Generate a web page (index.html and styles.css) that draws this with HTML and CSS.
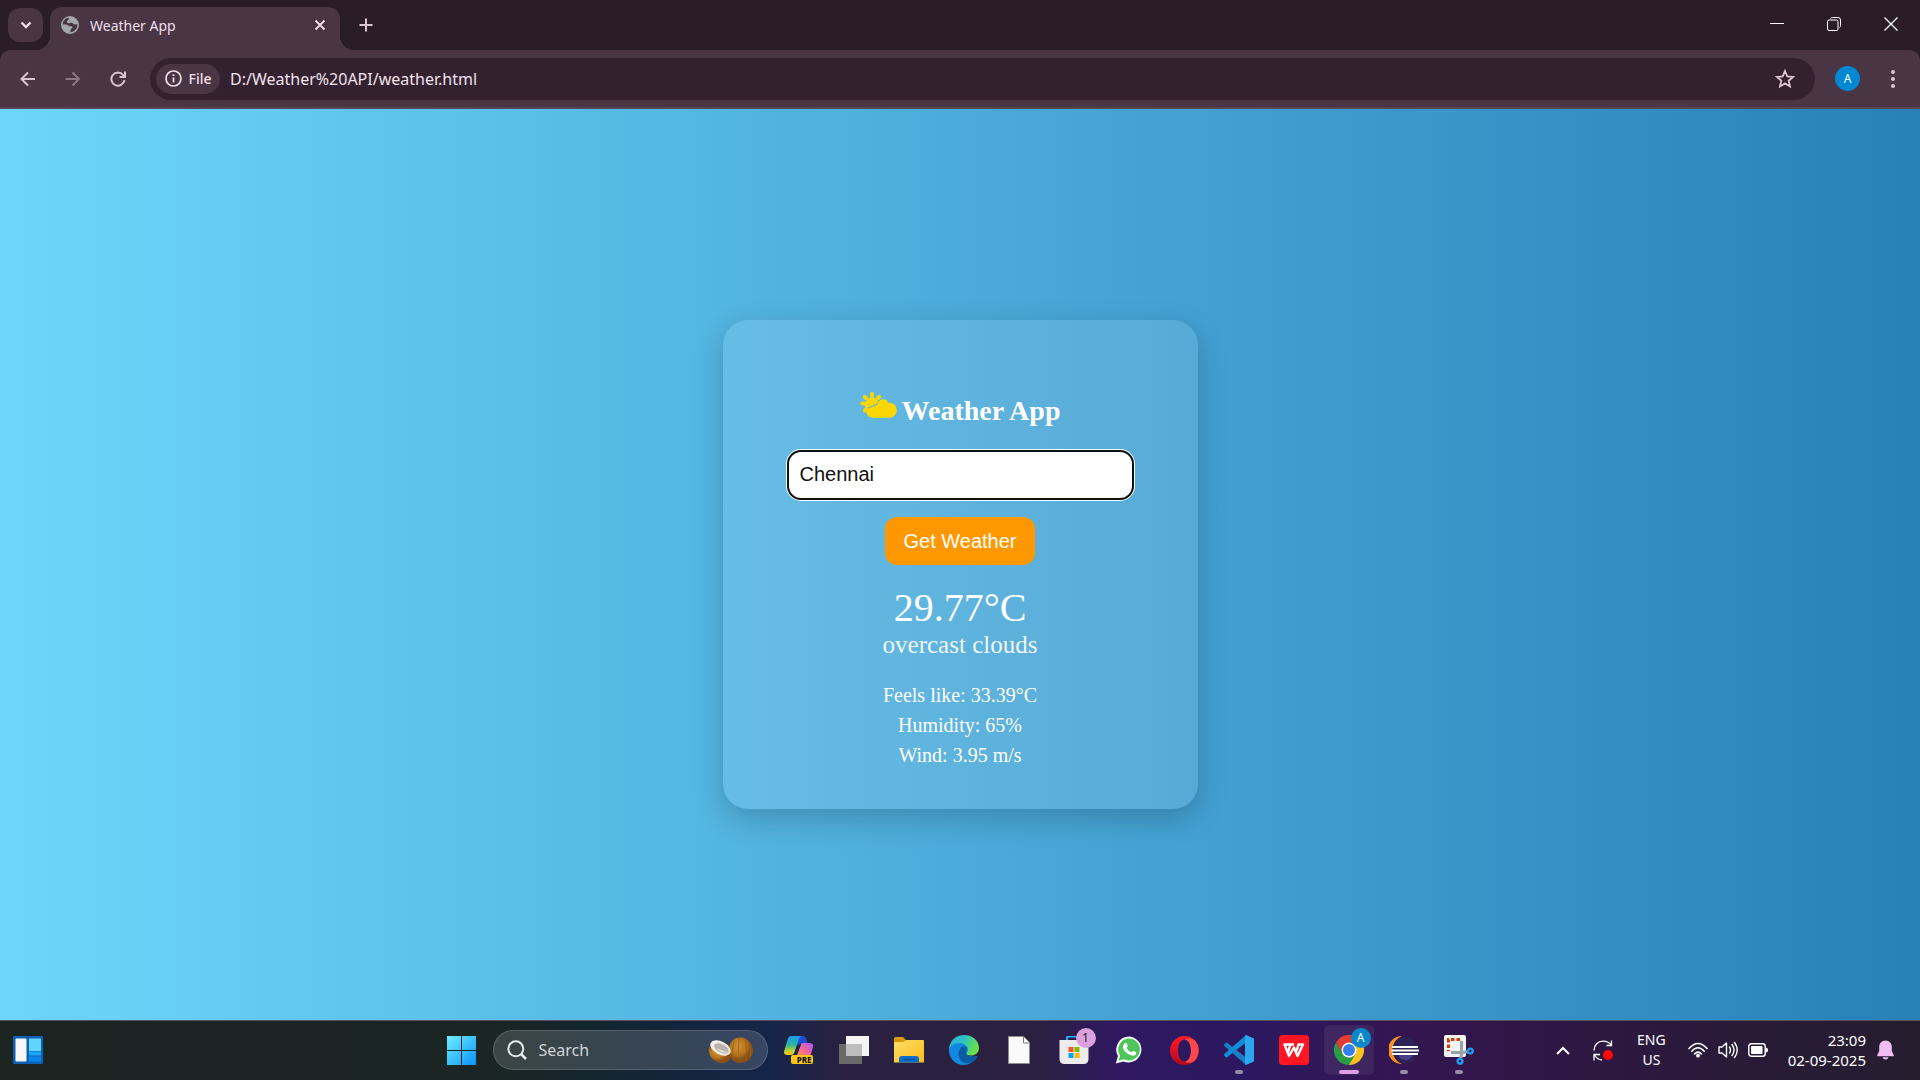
FILE: index.html
```html
<!DOCTYPE html>
<html lang="en">
<head>
<meta charset="utf-8">
<title>Weather App</title>
<link rel="stylesheet" href="styles.css">
</head>
<body>
<header class="browser">
  <div class="tabstrip">
    <button class="tab-search" aria-label="Search tabs"><svg width="12" height="8" viewBox="0 0 12 8"><path class="line" stroke-width="2.4" d="M1.500 1.500 6 6l4.500-4.500"/></svg></button>
    <div class="tab">
      <svg width="18" height="18" viewBox="0 0 18 18"><circle cx="9" cy="9" r="9" fill="#a2a6ad"/><path fill="#4a3545" d="M7.500 1.800C4 2.400 1.700 5.300 1.700 8.600h3.200c1.900 0 2.200 1.700 4 1.700h1.600c.7 0 1 .5 1 1 0 1.500-2 1-2 2.700v2.200c3.900-.3 6.800-3.500 6.800-7.200l-.2-1.500c-.5.800-1.200 1-2.100 1-1.700 0-1.900-1.800-3.600-1.800-1 0-1.700.5-2.800.5C6.500 7.200 6 6.500 6 5.600 6 4.300 7.600 4.500 7.600 3.200z"/></svg>
      <span class="tab-title">Weather App</span>
      <button class="plain" aria-label="Close tab"><svg width="12" height="12" viewBox="0 0 12 12"><path class="line" stroke-width="1.800" d="m1.500 1.500 9 9m0-9-9 9"/></svg></button>
    </div>
    <button class="new-tab" aria-label="New tab"><svg width="14" height="14" viewBox="0 0 14 14"><path class="line pink" stroke-width="2" d="M7 .5v13M.5 7h13"/></svg></button>
    <div class="window-buttons">
      <button aria-label="Minimize"><svg width="14" height="14" viewBox="0 0 14 14"><path stroke="#fff" d="M0 6.500h14"/></svg></button>
      <button aria-label="Restore"><svg width="14" height="14" viewBox="0 0 14 14"><g fill="none" stroke="#fff"><rect x=".5" y="3" width="10.500" height="10.500" rx="1.500"/><path d="M3.500 1.500Q4 .5 5.500.5H11Q13.500.5 13.500 3v5.500q0 1.500-1 2"/></g></svg></button>
      <button aria-label="Close"><svg width="14" height="14" viewBox="0 0 14 14"><path stroke="#fff" stroke-width="1.300" d="m.5.5 13 13m0-13-13 13"/></svg></button>
    </div>
  </div>
  <div class="toolbar">
    <div class="tool-group">
      <button aria-label="Back"><svg width="16" height="16" viewBox="0 0 16 16"><path class="line pink" stroke-width="2" d="M15 8H1.500M8 1.500 1.500 8 8 14.500"/></svg></button>
      <button class="dim" aria-label="Forward"><svg width="16" height="16" viewBox="0 0 16 16"><path class="line pink" stroke-width="2" d="M.5 8H14M7.500 1.500 14 8l-6.500 6.500"/></svg></button>
      <button aria-label="Reload"><svg width="16" height="16" viewBox="0 0 16 16"><path class="line pink" stroke-width="2" d="M14.500 9.200A6.600 6.600 0 1 1 13.200 4L15 6M15 .5V6H9.500"/></svg></button>
    </div>
    <div class="omnibox">
      <button class="file-chip"><svg width="17" height="17" viewBox="0 0 17 17"><circle class="line" cx="8.500" cy="8.500" r="7.500" stroke-width="1.700"/><path class="line" stroke-width="1.800" d="M8.500 7.500v5M8.500 4.200v1.800"/></svg>File</button>
      <input class="url" aria-label="Address" value="D:/Weather%20API/weather.html">
      <button class="plain" aria-label="Bookmark this page"><svg width="20" height="20" viewBox="0 0 20 20"><path class="line pink" stroke-width="1.800" d="m10 2 2.300 5.400 5.800.5-4.400 3.800 1.300 5.700-5-3-5 3 1.300-5.700-4.400-3.800 5.800-.5z"/></svg></button>
    </div>
    <div class="tool-group">
      <button aria-label="Profile"><span class="avatar">A</span></button>
      <button aria-label="Menu"><svg width="4" height="18" viewBox="0 0 4 18" fill="#dcc3d6"><circle cx="2" cy="2" r="2"/><circle cx="2" cy="9" r="2"/><circle cx="2" cy="16" r="2"/></svg></button>
    </div>
  </div>
</header>

<main class="page">
  <section class="card">
    <h1 class="card-title"><svg width="37" height="28" viewBox="0 0 37 28" fill="#ffd700"><g stroke="#ffd700" stroke-width="4" stroke-linecap="round"><path d="M12 2v2M2.200 11.500h2M4.800 4.800l1.400 1.400M19.200 4.800l-1.400 1.400M5 18.500l1.400-1.400"/></g><path d="M6 16.200A6.500 6.500 0 1 1 18.300 9q-1.200 1-1.400 2.600z"/><path d="M7.500 16.900 17.400 12.500C18 9.700 20.200 7.300 23.300 7.300c2.200 0 4 1.300 5 3.500 5-.4 8.500 3 8.500 7.400 0 4.300-3.400 7.500-7.500 7.500H13.200c-4.300 0-7.100-3.500-7.100-6.700z"/></svg>Weather App</h1>
    <input class="city" aria-label="City" value="Chennai">
    <button class="get-weather">Get Weather</button>
    <p class="temperature">29.77°C</p>
    <p class="description">overcast clouds</p>
    <div class="details">
      <p>Feels like: 33.39°C</p>
      <p>Humidity: 65%</p>
      <p>Wind: 3.95 m/s</p>
    </div>
  </section>
</main>

<footer class="taskbar">
  <div class="task-left">
    <button class="plain" aria-label="Widgets"><svg width="30" height="28" viewBox="0 0 30 28"><rect width="30" height="28" rx="1.500" fill="#0d60b4"/><rect x="2.500" y="2.500" width="11" height="23" rx="1" fill="#f6f6f6"/><path fill="#62d5ff" d="M16 2.500h12v12.500H16z"/><path fill="#1ba5fb" d="M16 15.500h12v4H16z"/><path fill="#0788ee" d="M16 20.500h12v5H16z"/></svg></button>
  </div>
  <div class="task-center">
    <button class="app" aria-label="Start"><svg width="29" height="29" viewBox="0 0 29 29"><defs><linearGradient id="win" x2="1" y2="1"><stop stop-color="#6ff0ff"/><stop offset="1" stop-color="#0a91fb"/></linearGradient></defs><path fill="url(#win)" d="M0 0h14v14H0zM15 0h14v14H15zM0 15h14v14H0zM15 15h14v14H15z"/></svg></button>
    <div class="search">
      <svg width="20" height="20" viewBox="0 0 20 20"><g fill="none" stroke="#e6e9ea" stroke-width="2"><circle cx="8.800" cy="8.800" r="7.500"/><path d="m14 14 5 5" stroke-width="2.600"/></g></svg>
      <input aria-label="Search" placeholder="Search">
      <svg width="46" height="27" viewBox="0 0 46 27"><defs><radialGradient id="nut" cx=".4" cy=".35"><stop stop-color="#d59336"/><stop offset=".7" stop-color="#b4721b"/><stop offset="1" stop-color="#8b5014"/></radialGradient></defs><path fill="url(#nut)" d="M21 10C23 3 28 0 33 .5 40 .5 45 7 45 14c0 7-6 12-13 12S19 19 21 10z"/><path fill="none" stroke="#9a601c" stroke-width=".8" d="M26 4q-3 9 0 19M31 1q-2 12 1 24M36 2q4 9 2 21M41 6q3 6 1 13"/><path fill="url(#nut)" d="M1 10C-1 20 8 27 15 26c5 0 8-4 8-9z"/><ellipse cx="12.500" cy="11" rx="11" ry="6.500" transform="rotate(27 12.500 11)" fill="#f4eee6"/><ellipse cx="13.500" cy="11.500" rx="8" ry="4.300" transform="rotate(27 13.500 11.500)" fill="#b9b3ab"/><path d="M8 11q6 6 12 4-6-1-12-4z" fill="#eee8e0"/></svg>
    </div>
    <button class="app" aria-label="Copilot"><svg width="30" height="30" viewBox="0 0 30 30"><defs><linearGradient id="co1" x2="0" y2="1"><stop stop-color="#1d9bf0"/><stop offset=".45" stop-color="#27b5a0"/><stop offset=".8" stop-color="#c9d22c"/><stop offset="1" stop-color="#f4c914"/></linearGradient><linearGradient id="co2" x1="1" x2="0" y2="1"><stop stop-color="#a05cf4"/><stop offset=".5" stop-color="#ef62a5"/><stop offset="1" stop-color="#ff8b4c"/></linearGradient></defs><path fill="#1c4fd0" d="M11 1h8q2.500 0 3.500 4l1 3h-6l-4 3z"/><path fill="url(#co1)" d="M7 1h11q-2.500.5-3.500 4l-4 12q-1 3-3.500 3H3q-4 0-2.500-5l3-10q1-4 3.500-4z"/><path fill="url(#co2)" d="M18 8h7q5 0 4 4l-2.500 8H13l3.500-9q.5-3 1.500-3z"/><rect x="7" y="20" width="22" height="9" rx="2" fill="#ffc61a"/></svg><span class="pre">PRE</span></button>
    <button class="app" aria-label="Task view"><svg width="30" height="28" viewBox="0 0 30 28"><path fill="#696969" d="M0 8h23v20H0z"/><path fill="#f4f4f4" d="M7 0h23v20H7z"/><path fill="#bdbdbd" d="M7 8h16v12H7z"/></svg></button>
    <button class="app" aria-label="File Explorer"><svg width="30" height="28" viewBox="0 0 30 28"><defs><linearGradient id="fold" x2="1" y2="1"><stop stop-color="#ffdd6b"/><stop offset="1" stop-color="#fbbc16"/></linearGradient></defs><path fill="#d99a08" d="M0 2.500Q0 1 1.500 1H9l3.500 3.500L11 8H0z"/><path fill="url(#fold)" d="M0 6h9l3.500-2H29q1 0 1 1v21.500H0z"/><path fill="#0b6fca" d="M5 26.500V23q0-3 3-3h14q3 0 3 3v3.500z"/><path stroke="#0a4f9a" stroke-width="1.500" d="M9 23.500h12"/></svg></button>
    <button class="app" aria-label="Edge"><svg width="30" height="30" viewBox="0 0 30 30"><defs><linearGradient id="edge" x2="1" y2=".4"><stop stop-color="#2aa9e0"/><stop offset=".5" stop-color="#2fc2c4"/><stop offset="1" stop-color="#68e04b"/></linearGradient></defs><path fill="#1188df" d="M0 14C1 7 8 5 14 7c5 2 6 6 5 9-3 4 2 7 9 5-3 6-8 9-13 9C6 30-.5 23 0 14z"/><path fill="#0c59a4" d="M11 14c3-4 7-3 7 0-3 5 2 10 10 7 1 0 1 1 0 2C24 29 15 30 11.500 25 9 21 9 17 11 14z"/><path fill="url(#edge)" d="M0 14C1 5 7 0 15 0c9 0 15 6 15 13 0 5-4 7.500-8 7.500-3 0-4.500-1-4.500-2s1.500-1.500 1.500-4C19 11 15 8 10.500 8 5 8 1.500 11 0 14z"/></svg></button>
    <button class="app" aria-label="Document"><svg width="22" height="28" viewBox="0 0 22 28"><path fill="#fafafa" stroke="#8b8b8b" stroke-width=".8" d="M.5.5h15l6 6v21H.5z"/><path fill="#fff" stroke="#777" d="M15.500.5v6.500h6"/></svg></button>
    <button class="app" aria-label="Microsoft Store"><svg width="30" height="28" viewBox="0 0 30 28"><path d="M8 7V2q0-1.500 1.500-1.500h11Q22 .5 22 2v5" fill="none" stroke="#21b4f5" stroke-width="2"/><path fill="#ececec" d="M.5 4h29v19q0 5-5 5h-19q-5 0-5-5z"/><path fill="#f35325" d="M9.500 11h5v5h-5z"/><path fill="#81bc06" d="M15.500 11h5v5h-5z"/><path fill="#05a6f0" d="M9.500 17h5v5h-5z"/><path fill="#ffba08" d="M15.500 17h5v5h-5z"/></svg><span class="badge count">1</span></button>
    <button class="app" aria-label="WhatsApp"><svg width="28" height="28" viewBox="0 0 28 28"><path fill="#fff" d="M14.500.5A13 13 0 0 0 3 20L.8 27.500l7.700-2A13 13 0 1 0 14.500.5z"/><path fill="#4dc559" d="M14.500 2.500A11 11 0 0 0 5 19.500L3.600 24.700l5.400-1.400A11 11 0 1 0 14.500 2.500z"/><path fill="#fff" d="M9.500 7.500c1-1 2-.8 2.400.3l.8 2c.3.8-.9 1.700-.9 2.100 1 2.100 2.600 3.500 4.700 4.300.6 0 1.300-1.600 2-1.400l2.400 1.200c.8.5.3 2.200-.6 2.900-3.400 2.800-13.100-2.900-12.300-8.800.2-1 .8-1.900 1.500-2.600z"/></svg></button>
    <button class="app" aria-label="Opera"><svg width="29" height="29" viewBox="0 0 29 29"><defs><linearGradient id="opera" x2="0" y2="1"><stop stop-color="#ff1b2d"/><stop offset="1" stop-color="#b30a1a"/></linearGradient></defs><path fill="url(#opera)" fill-rule="evenodd" d="M14.500 0a14.500 14.500 0 1 1 0 29a14.500 14.500 0 1 1 0-29M14.500 3.500C10.500 3.500 8 8.500 8 14.500s2.500 11 6.500 11 6.500-5 6.500-11-2.500-11-6.500-11"/><path fill="#fb484c" d="M14.500 3.500C19 1 24 4 24.500 4q4 4.500 4 10.500T24.500 25C22 27 18 27.500 14.500 25.500c4 0 6.500-5 6.500-11s-2.500-11-6.500-11z"/></svg></button>
    <button class="app" aria-label="Visual Studio Code"><svg width="30" height="30" viewBox="0 0 30 30"><path fill="#1a7cc2" d="m0 9.500 2.500-2.200L22 22.500V30L.3 11z"/><path fill="#168bd5" d="m0 20.500 2.500 2.200L22 7.500V0L.3 19z"/><path fill="#2ca6ee" d="m22 0 8 3.500v23L22 30q-1-.5-1-2V2q0-1.500 1-2z"/></svg><span class="running"></span></button>
    <button class="app" aria-label="WPS Office"><svg width="30" height="30" viewBox="0 0 30 30"><rect width="30" height="30" rx="3.500" fill="#ff1622"/><path fill="none" stroke="#fff" stroke-width="2.400" stroke-linejoin="round" d="M15 9.500H5.500l4.500 11.500 5-8.500 3.500 8.500 5.500-11.500h-4.500L17.500 16M11.500 9.500 9 17"/></svg></button>
    <button class="app active" aria-label="Chrome"><svg width="30" height="30" viewBox="0 0 30 30"><path fill="#e33b2e" d="M2 7.500A15 15 0 0 1 28 7.500H15L8.500 18.800z"/><path fill="#2a9e47" d="M2 7.500A15 15 0 0 0 15 30l6.500-11.300H8.500z"/><path fill="#fcc31e" d="M28 7.500A15 15 0 0 1 15 30l6.500-11.300L19 7.500z"/><circle cx="15" cy="15" r="7.500" fill="#fff"/><circle cx="15" cy="15" r="6" fill="#347fec"/></svg><span class="badge profile">A</span><span class="running current"></span></button>
    <button class="app" aria-label="Eclipse"><svg width="30" height="28" viewBox="0 0 30 28"><path fill="#f7941e" d="M13 0A14 14 0 0 0 13 28 15 15 0 0 1 13 0z"/><ellipse cx="16.500" cy="14" rx="12.500" ry="13.500" fill="#2c2255"/><path fill="#4a3d85" d="M9 18h15q-2 6-7.500 6T9 18z"/><path fill="#fff" d="M3 10h26v2H3zM2.500 13.500H30v2H2.500zM3 17h26v2H3z"/></svg><span class="running"></span></button>
    <button class="app" aria-label="Snipping Tool"><svg width="30" height="30" viewBox="0 0 30 30"><rect width="22" height="22" rx="2" fill="#f4f4f4"/><path fill="none" stroke="#d83b01" stroke-width="3" stroke-dasharray="3.500 2" d="M16 4.500H4.500V16"/><path fill="none" stroke="#9aa3aa" stroke-width="3" d="M17.500 6v13l-1 5M7 17.500h12l5-1"/><g fill="none" stroke="#1d9cf0" stroke-width="2.400"><circle cx="26.300" cy="16" r="2.400"/><circle cx="16" cy="26.300" r="2.400"/></g></svg><span class="running"></span></button>
  </div>
  <div class="tray">
    <button class="plain" aria-label="Show hidden icons"><svg width="14" height="9" viewBox="0 0 14 9"><path class="line white" stroke-width="2" d="m1 8 6-6 6 6"/></svg></button>
    <button class="plain sync" aria-label="Update"><svg width="20" height="21" viewBox="0 0 20 21"><g fill="none" stroke="#fff" stroke-width="1.300"><path d="M1 10.500C1 5 5 1.200 10 1.200q5.500 0 8.500 4.300M18.500.5v5h-5M9 20q-5-.5-7.500-5M1 20.500V14.500h6"/></g><circle cx="15" cy="15" r="5" fill="#fe0808"/></svg></button>
    <span class="language">ENG<br>US</span>
    <div class="status">
      <svg width="20" height="16" viewBox="0 0 20 16"><g fill="none" stroke="#fff" stroke-width="1.600" stroke-linecap="round"><path d="M1 6.500q9-10 18 0M3.800 9.300q6.200-7 12.400 0M6.600 12q3.400-3.800 6.800 0"/></g><circle cx="10" cy="13.700" r="1.900" fill="#fff"/></svg>
      <svg width="20" height="18" viewBox="0 0 20 18"><g fill="none" stroke="#fff" stroke-width="1.400" stroke-linecap="round" stroke-linejoin="round"><path d="M1 6h3l4.500-4v14L4 12H1zM11.500 6q2 3 0 6M14 3.500q4 5.500 0 11M16.500 1.500q5.500 7.500 0 15"/></g></svg>
      <svg width="20" height="14" viewBox="0 0 20 14"><rect x=".8" y=".8" width="16.400" height="12.400" rx="2.500" fill="none" stroke="#fff" stroke-width="1.400"/><rect x="3" y="3" width="11.500" height="8" rx="1" fill="#fff"/><path fill="#fff" d="M17.500 4.500q2.500 0 2.500 2.500t-2.500 2.500z"/></svg>
    </div>
    <time class="clock">23:09<br>02-09-2025</time>
    <button class="plain" aria-label="Notifications"><svg width="17" height="20" viewBox="0 0 17 20"><path fill="#efbdf3" d="M8.500.5C4.500.5 2.200 3.500 2.200 7v4L.3 15v1.200h16.400V15l-1.900-4V7c0-3.500-2.300-6.500-6.300-6.500zM5.500 17.200q.6 2.300 3 2.300t3-2.300z"/></svg></button>
  </div>
</footer>
</body>
</html>
```
FILE: styles.css
```css
* {
  box-sizing: border-box;
}

body {
  display: flex;
  flex-direction: column;
  min-height: 100vh;
  margin: 0;
  font-family: "Noto Sans", sans-serif;
}

button {
  display: flex;
  align-items: center;
  justify-content: center;
  padding: 0;
  border: 0;
  background: none;
  color: inherit;
  font: inherit;
}

input {
  min-width: 0;
  border: 0;
  outline: 0;
}

svg {
  display: block;
  flex: none;
}

p {
  margin: 0;
}

.line {
  fill: none;
  stroke: #eedfe9;
}

.pink {
  stroke: #dcc3d6;
}

.white {
  stroke: #fff;
}

/* Browser frame */

.browser {
  background: #2b1c29;
  color: #eedfe9;
}

.tabstrip {
  display: flex;
  height: 50px;
  padding: 0 1px 0 8px;
}

.tab-search {
  width: 35px;
  height: 34px;
  margin-top: 8px;
  border-radius: 12px;
  background: #4a3545;
}

.tab {
  position: relative;
  display: flex;
  align-items: center;
  gap: 11px;
  width: 290px;
  margin: 7px 0 0 7px;
  padding: 0 14px 7px 11px;
  border-radius: 12px 12px 0 0;
  background: #4a3545;
}

.tab::before,
.tab::after {
  content: "";
  position: absolute;
  bottom: 0;
  width: 14px;
  height: 14px;
}

.tab::before {
  right: 100%;
  background: radial-gradient(circle at 0 0, transparent 14px, #4a3545 14px);
}

.tab::after {
  left: 100%;
  background: radial-gradient(circle at 100% 0, transparent 14px, #4a3545 14px);
}

.tab-title {
  flex: 1;
  font-size: 14px;
}

.new-tab {
  width: 35px;
  height: 34px;
  margin: 8px 0 0 8px;
}

.window-buttons {
  display: flex;
  margin-left: auto;
}

.window-buttons button {
  width: 57px;
  height: 48px;
}

.toolbar {
  display: flex;
  align-items: center;
  gap: 10px;
  height: 59px;
  padding: 0 5px;
  border-bottom: 2px solid #5a4652;
  border-radius: 10px 10px 0 0;
  background: #4a3545;
}

.tool-group {
  display: flex;
}

.tool-group button {
  width: 45px;
  height: 40px;
}

.tool-group .dim {
  opacity: 0.45;
}

.omnibox {
  display: flex;
  flex: 1;
  align-items: center;
  gap: 10px;
  height: 42px;
  padding: 0 20px 0 6px;
  border-radius: 21px;
  background: #33212f;
}

.file-chip {
  gap: 7px;
  width: 64px;
  height: 30px;
  border-radius: 15px;
  background: #4a3545;
  font-size: 14px;
  font-weight: 500;
}

.url {
  flex: 1;
  padding: 0;
  background: none;
  color: #f1e2ec;
  font: 16px "Noto Sans", sans-serif;
}

.avatar {
  width: 25px;
  border-radius: 50%;
  background: #0288d1;
  color: #fff;
  font-size: 12px;
  line-height: 25px;
}

/* Weather page */

.page {
  display: flex;
  flex: 1;
  align-items: center;
  justify-content: center;
  background: linear-gradient(to right, #6dd5fa, #2980b9);
}

.card {
  display: flex;
  flex-direction: column;
  align-items: center;
  width: 475px;
  padding: 72px 64px 39px;
  border-radius: 25px;
  background: rgba(255, 255, 255, 0.11);
  box-shadow: 0 10px 31px rgba(0, 0, 0, 0.2);
  color: #fff;
  font-family: "Liberation Serif", serif;
  text-align: center;
}

.card-title {
  display: flex;
  align-items: baseline;
  gap: 5px;
  margin: 0 0 23px;
  font-size: 28px;
  line-height: 32px;
}

.city {
  width: 100%;
  height: 50px;
  padding: 0 11px 2px;
  border: 2px solid #101010;
  border-radius: 14px;
  background: #fff;
  box-shadow: 0 0 0 1px #fff;
  color: #111;
  font: 20px "Liberation Sans", sans-serif;
}

.get-weather {
  width: 150px;
  height: 48px;
  margin: 17px 0 20px;
  border-radius: 12px;
  background: #ff9800;
  color: #fff;
  font: 20px "Liberation Sans", sans-serif;
}

.temperature {
  font-size: 40px;
  line-height: 46px;
}

.description {
  margin-bottom: 21px;
  font-size: 25px;
  line-height: 28px;
  opacity: 0.9;
}

.details {
  font-size: 20px;
  line-height: 30px;
}

/* Taskbar */

.taskbar {
  display: grid;
  grid-template-columns: 1fr auto 1fr;
  align-items: center;
  height: 60px;
  padding-bottom: 1px;
  border-top: 1px solid #54525f;
  background: linear-gradient(to right, #1c2422 0, #1b2523 25%, #14252f 31%, #15254a 40%, #2a2140 44%, #2b2040 54%, #2f1860 58%, #2c1860 65%, #34154f 74%, #2f1746 80%, #291b36 92%, #261d2f 100%);
  color: #fff;
}

.task-left {
  padding-left: 13px;
}

.task-center {
  display: flex;
  align-items: center;
}

.app {
  position: relative;
  width: 55px;
  height: 50px;
}

.search {
  display: flex;
  align-items: center;
  gap: 12px;
  width: 275px;
  height: 40px;
  margin: 0 4px;
  padding: 0 13px;
  border: 1px solid rgba(255, 255, 255, 0.15);
  border-radius: 20px;
  background: rgba(255, 255, 255, 0.15);
}

.search input {
  flex: 1;
  padding: 0;
  background: none;
  color: #fff;
  font: 16px "Noto Sans", sans-serif;
}

.search input::placeholder {
  color: #d0d4d6;
}

.pre {
  position: absolute;
  right: 15px;
  bottom: 11px;
  color: #111;
  font-size: 8px;
  font-weight: 800;
  line-height: 9px;
}

.badge {
  position: absolute;
  top: 3px;
  right: 6px;
  width: 20px;
  border-radius: 50%;
  font-size: 12px;
  line-height: 20px;
}

.count {
  background: #dc9fe0;
  color: #222;
}

.profile {
  background: #0a88cc;
}

.running {
  position: absolute;
  bottom: 1px;
  width: 8px;
  height: 4px;
  border-radius: 2px;
  background: #9a8aac;
}

.running.current {
  width: 20px;
  background: #dc9fe4;
}

.active::before {
  content: "";
  position: absolute;
  inset: 0 3px 0 2px;
  border: 1px solid rgba(255, 255, 255, 0.06);
  border-right-width: 6px;
  border-radius: 5px;
  background: rgba(255, 255, 255, 0.07);
  background-clip: padding-box;
}

.active svg {
  position: relative;
}

.tray {
  display: flex;
  align-items: center;
  justify-content: flex-end;
  padding-right: 26px;
  font-size: 14px;
  line-height: 20px;
}

.sync {
  margin-left: 23px;
}

.language {
  margin: 0 22px 0 24px;
  text-align: center;
}

.status {
  display: flex;
  align-items: center;
  gap: 10px;
}

.clock {
  margin: 0 11px 0 20px;
  font-size: 15px;
  text-align: right;
}
```
